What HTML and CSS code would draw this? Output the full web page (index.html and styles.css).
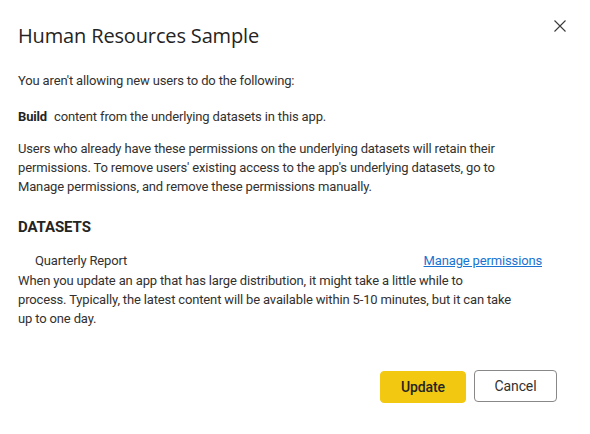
FILE: index.html
```html
<!DOCTYPE html>
<html lang="en">
<head>
<meta charset="utf-8">
<title>Human Resources Sample</title>
<link rel="stylesheet" href="styles.css">
</head>
<body>
<div class="dialog">
  <button class="close" aria-label="Close">
    <svg width="12" height="12" viewBox="0 0 12 12"><path d="M0.5 0.5 L11.5 11.5 M11.5 0.5 L0.5 11.5" stroke="#3b3a39" stroke-width="1.1" fill="none"/></svg>
  </button>
  <h1 class="title">Human Resources Sample</h1>
  <p class="intro">You aren't allowing new users to do the following:</p>
  <p class="perm"><strong>Build</strong><span class="perm-text">content from the underlying datasets in this app.</span></p>
  <p class="para">Users who already have these permissions on the underlying datasets will retain their permissions. To remove users' existing access to the app's underlying datasets, go to Manage permissions, and remove these permissions manually.</p>
  <h2 class="section">DATASETS</h2>
  <div class="dataset-row">
    <span class="dataset-name">Quarterly Report</span>
    <a class="link" href="#">Manage permissions</a>
  </div>
  <p class="para note">When you update an app that has large distribution, it might take a little while to<br>process. Typically, the latest content will be available within 5-10 minutes, but it can take up to one day.</p>
  <div class="actions">
    <button class="btn primary">Update</button>
    <button class="btn secondary">Cancel</button>
  </div>
</div>
</body>
</html>
```
FILE: styles.css
```css
html, body {
  margin: 0;
  padding: 0;
  background: #ffffff;
}
body {
  font-family: Roboto, "Open Sans", sans-serif;
  color: #323130;
  font-size: 13px;
  letter-spacing: -0.15px;
}
.dialog {
  position: relative;
  width: 590px;
  height: 434px;
  box-sizing: border-box;
  padding: 22px 32px 0 18px;
}
.close {
  position: absolute;
  top: 20px;
  right: 24px;
  width: 12px;
  height: 12px;
  padding: 0;
  border: 0;
  background: none;
  display: flex;
}
.title {
  margin: 0;
  font-family: "Open Sans", sans-serif;
  font-size: 20px;
  font-weight: 400;
  letter-spacing: -0.15px;
  line-height: 28px;
  color: #252423;
}
.intro {
  margin: 21px 0 0;
  line-height: 19px;
}
.perm {
  margin: 17px 0 0;
  line-height: 19px;
}
.perm strong {
  font-weight: 700;
  color: #252423;
}
.perm-text {
  margin-left: 7px;
}
.para {
  margin: 13px 0 0;
  line-height: 19px;
  width: 500px;
}
.section {
  margin: 21px 0 0;
  font-size: 15px;
  font-weight: 700;
  line-height: 20px;
  letter-spacing: -0.1px;
  color: #252423;
}
.dataset-row {
  display: flex;
  justify-content: space-between;
  margin: 14px 0 0;
  padding: 0 0 0 17px;
  line-height: 19px;
  width: 524px;
  box-sizing: border-box;
}
.link {
  color: #1a73d1;
  text-decoration: underline;
}
.note {
  margin-top: 1px;
}
.actions {
  display: flex;
  justify-content: flex-end;
  gap: 8px;
  margin-top: 43px;
  padding-right: 1px;
}
.btn {
  height: 32px;
  border-radius: 4px;
  font-family: inherit;
  font-size: 14px;
  letter-spacing: -0.1px;
  box-sizing: border-box;
}
.primary {
  width: 86px;
  background: #f2c811;
  border: 1px solid #f2c811;
  color: #252423;
  font-weight: 500;
}
.secondary {
  width: 83px;
  margin-top: -1px;
  background: #fff;
  border: 1px solid #8a8886;
  color: #323130;
}
```
